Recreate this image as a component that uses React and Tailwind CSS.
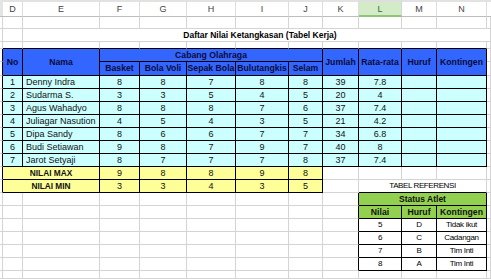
import React from 'react';

const G = 'border-r border-b border-[#d4d4d4]';
const B = 'border-r border-b border-black';
const C = 'flex items-center justify-center whitespace-nowrap overflow-hidden';
const H = 'bg-[#3366ff] font-bold text-[#0b0b3a] text-[8.7px]';

const letters = ['D', 'E', 'F', 'G', 'H', 'I', 'J', 'K', 'L', 'M', 'N'];

const siswa = [
  ['1', 'Denny Indra', 8, 8, 7, 8, 8, 39, '7.8'],
  ['2', 'Sudarma S.', 3, 3, 5, 4, 5, 20, '4'],
  ['3', 'Agus Wahadyo', 8, 8, 8, 7, 6, 37, '7.4'],
  ['4', 'Juliagar Nasution', 4, 5, 4, 3, 5, 21, '4.2'],
  ['5', 'Dipa Sandy', 8, 6, 6, 7, 7, 34, '6.8'],
  ['6', 'Budi Setiawan', 9, 8, 7, 9, 7, 40, '8'],
  ['7', 'Jarot Setyaji', 8, 7, 7, 7, 8, 37, '7.4'],
];

const referensi = [
  ['5', 'D', 'Tidak ikut'],
  ['6', 'C', 'Cadangan'],
  ['7', 'B', 'Tim Inti'],
  ['8', 'A', 'Tim Inti'],
];

function Blank({ n, extra = '' }) {
  return Array.from({ length: n }).map((_, i) => <div key={i} className={`${G} ${extra}`} />);
}

export default function App() {
  return (
    <div className="w-[491px] h-[279px] overflow-hidden bg-white font-['Liberation_Sans',Arial,sans-serif] text-[9px] leading-none text-[#111]">
      <div className="grid grid-cols-[3px_20px_77px_40px_47px_49px_53px_34px_36px_43px_35px_50px_4px] grid-rows-[17px_12px_13px_7px_13px_14px_repeat(7,13px)_13px_13px_repeat(6,13px)_8px]">
        {/* kolom huruf */}
        <div className="bg-[#e4e4e4] border-b border-[#bdbdbd]" />
        {letters.map((l) =>
          l === 'L' ? (
            <div key={l} className={`${C} bg-[#d3ebc7] text-[#2e6b35] border-r border-b-2 border-r-[#d4d4d4] border-b-[#8cc47a] border-t-2 border-t-[#dedede] pt-[1px]`}>{l}</div>
          ) : (
            <div key={l} className={`${C} text-[#444] border-r border-b border-r-[#dedede] border-b-[#bdbdbd] border-t-2 border-t-[#e2e2e2] pt-[1px]`}>{l}</div>
          )
        )}
        <div className="border-b border-[#bdbdbd] border-t-2 border-t-[#e2e2e2]" />

        {/* baris kosong */}
        <Blank n={13} />

        {/* judul */}
        <div className={G} />
        <div className={G} />
        <div className={`${C} col-span-10 border-b border-[#d4d4d4] font-bold text-black text-[8.5px]`}>
          <span className="ml-[10px]">Daftar Nilai Ketangkasan (Tabel Kerja)</span>
        </div>
        <div className={G} />

        {/* baris pendek */}
        <div className={G} />
        <Blank n={11} extra="border-b-black" />
        <div className={G} />

        {/* header tabel */}
        <div className={`${G} border-r-black`} />
        <div className={`${C} ${B} ${H} row-span-2`}>No</div>
        <div className={`${C} ${B} ${H} row-span-2`}>Nama</div>
        <div className={`${C} ${B} ${H} col-span-5`}>Cabang Olahraga</div>
        <div className={`${C} ${B} ${H} row-span-2`}>Jumlah</div>
        <div className={`${C} ${B} ${H} row-span-2`}>Rata-rata</div>
        <div className={`${C} ${B} ${H} row-span-2`}>Huruf</div>
        <div className={`${C} ${B} ${H} row-span-2`}>Kontingen</div>
        <div className={G} />

        <div className={`${G} border-r-black`} />
        {['Basket', 'Bola Voli', 'Sepak Bola', 'Bulutangkis', 'Selam'].map((h) => (
          <div key={h} className={`${C} ${B} ${H}`}>{h}</div>
        ))}
        <div className={G} />

        {/* data */}
        {siswa.map((s) => (
          <React.Fragment key={s[0]}>
            <div className={`${G} border-r-black`} />
            <div className={`${C} ${B} bg-[#ccffff]`}>{s[0]}</div>
            <div className={`${B} bg-[#ccffff] flex items-center pl-[3px] whitespace-nowrap overflow-hidden`}>{s[1]}</div>
            {s.slice(2).map((v, i) => (
              <div key={i} className={`${C} ${B} bg-[#ccffff]`}>{v}</div>
            ))}
            <div className={`${B} bg-[#ccffff]`} />
            <div className={`${B} bg-[#ccffff]`} />
            <div className={G} />
          </React.Fragment>
        ))}

        {/* nilai max */}
        <div className={`${G} border-r-black`} />
        <div className={`${C} ${B} col-span-2 bg-[#ffff99] font-bold text-[8.3px]`}>NILAI MAX</div>
        {[9, 8, 8, 9, 8].map((v, i) => (
          <div key={i} className={`${C} ${B} bg-[#ffff99]`}>{v}</div>
        ))}
        <Blank n={5} />

        {/* nilai min */}
        <div className={`${G} border-r-black`} />
        <div className={`${C} ${B} col-span-2 bg-[#ffff99] font-bold text-[8.3px]`}>NILAI MIN</div>
        {[3, 3, 4, 3, 5].map((v, i) => (
          <div key={i} className={`${C} ${B} bg-[#ffff99]`}>{v}</div>
        ))}
        <div className={G} />
        <div className={`${C} col-span-3 border-r border-b border-r-[#d4d4d4] border-b-black text-[8px] tracking-[-0.4px] text-black`}>TABEL REFERENSI</div>
        <div className={G} />

        {/* status atlet */}
        <Blank n={8} />
        <div className={`${G} border-r-black`} />
        <div className={`${C} ${B} col-span-3 bg-[#92d050] font-bold text-[8.5px]`}>Status Atlet</div>
        <div className={G} />

        <Blank n={8} />
        <div className={`${G} border-r-black`} />
        {['Nilai', 'Huruf', 'Kontingen'].map((h) => (
          <div key={h} className={`${C} ${B} bg-[#92d050] font-bold text-[8.7px]`}>{h}</div>
        ))}
        <div className={G} />

        {referensi.map((r) => (
          <React.Fragment key={r[0]}>
            <Blank n={8} />
            <div className={`${G} border-r-black`} />
            {r.map((v, i) => (
              <div key={i} className={`${C} ${B} text-[8px] tracking-[-0.3px] text-black`}>{v}</div>
            ))}
            <div className={G} />
          </React.Fragment>
        ))}

        <Blank n={13} />
      </div>
    </div>
  );
}
